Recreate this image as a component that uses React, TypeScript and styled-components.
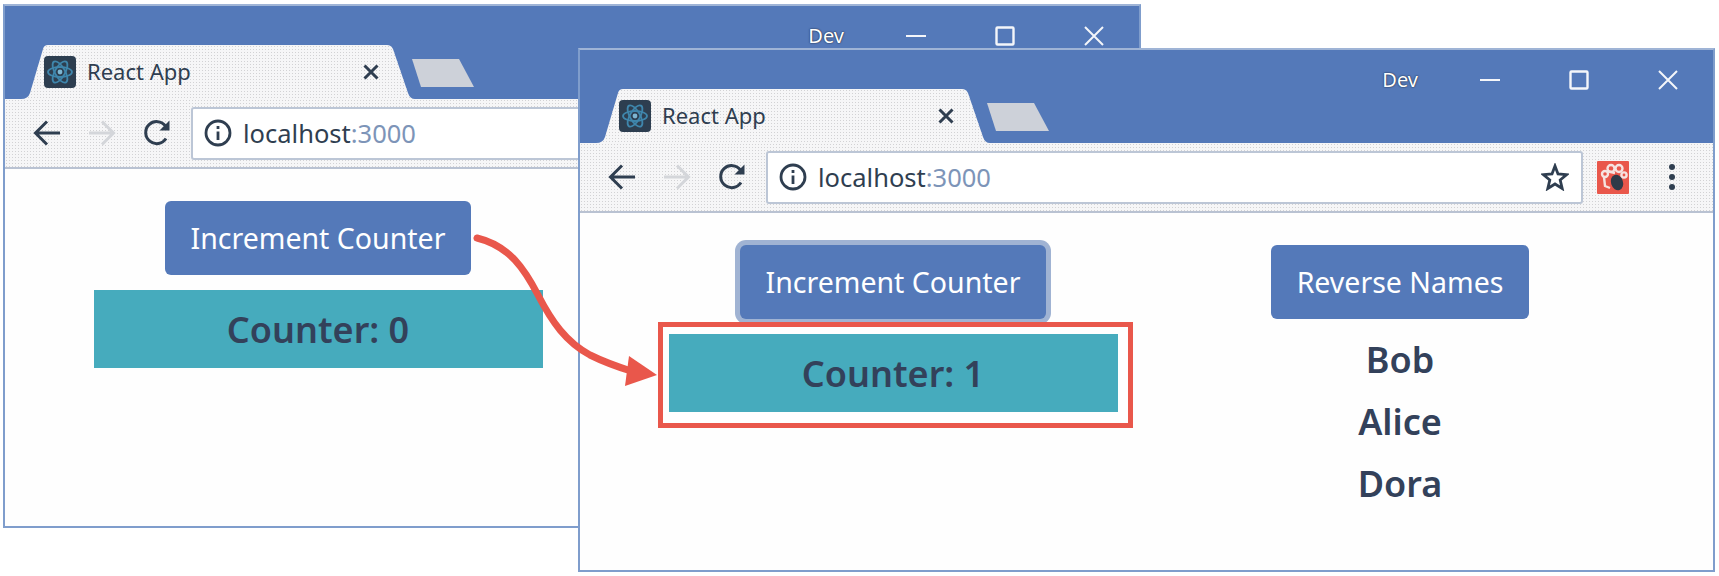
import React from "react";
import styled, { createGlobalStyle } from "styled-components";

const Global = createGlobalStyle`
  html, body { margin: 0; padding: 0; background: #fff; }
  body { font-family: "Noto Sans", "Open Sans", sans-serif; }
`;

const Desktop = styled.div`
  position: relative;
  width: 1719px;
  height: 576px;
  overflow: hidden;
  background: #fff;
`;

const Window = styled.section<{ $left: number; $top: number; $width: number }>`
  position: absolute;
  left: ${(p) => p.$left}px;
  top: ${(p) => p.$top}px;
  width: ${(p) => p.$width}px;
  height: 524px;
  box-sizing: border-box;
  display: flex;
  flex-direction: column;
  border: 2px solid #7f9dcc;
  border-top-color: #9fb4d6;
  background: #fefefe;
`;

const TitleBar = styled.header`
  height: 93px;
  flex: none;
  display: flex;
  align-items: flex-start;
  padding: 0 35px 0 16px;
  background-color: #5479b9;
  background-image: radial-gradient(#4f87b9 0.6px, transparent 0.7px);
  background-size: 4px 4px;
`;

const TabStrip = styled.div`
  display: flex;
  align-items: flex-start;
  margin-top: 39px;
`;

const Tab = styled.div`
  width: 394px;
  height: 54px;
  box-sizing: border-box;
  display: flex;
  align-items: center;
  padding: 0 36px 0 23px;
  background-color: #f6f6f7;
  background-image: radial-gradient(#d2d2d4 0.6px, transparent 0.7px);
  background-size: 3px 3px;
  clip-path: path("M0 54 Q7 54 9 48 L22 4 Q23 0 27 0 L366 0 Q370 0 372 4 L387 48 Q389 54 394 54 Z");
`;

const TabTitle = styled.span`
  flex: 1;
  margin-left: 11px;
  padding-bottom: 3px;
  font-size: 22px;
  color: #2f3e50;
`;

const NewTab = styled.div`
  width: 62px;
  height: 28px;
  margin: 14px 0 0 -3px;
  background: #cdd1d9;
  clip-path: polygon(0 0, 47px 0, 62px 28px, 9px 28px);
`;

const WindowControls = styled.div`
  margin-left: auto;
  display: flex;
  align-items: center;
  padding-top: 20px;
  color: #f4f6fa;
`;

const Channel = styled.span`
  margin-right: 62px;
  font-size: 20px;
  line-height: 20px;
  color: #fff;
  text-shadow: 0 0 2px #26344e, 0 0 1px #26344e;
`;

const ControlIcon = styled.svg`
  display: block;
  width: 20px;
  height: 20px;
  margin-left: 69px;
  &:first-of-type { margin-left: 0; }
`;

const Toolbar = styled.div`
  height: 70px;
  flex: none;
  box-sizing: border-box;
  display: flex;
  align-items: center;
  padding-left: 28px;
  border-bottom: 2px solid #b9c2d2;
  background-color: #f6f6f7;
  background-image: radial-gradient(#d2d2d4 0.6px, transparent 0.7px);
  background-size: 3px 3px;
`;

const NavIcon = styled.svg<{ $gap?: number; $muted?: boolean }>`
  display: block;
  flex: none;
  width: 28px;
  height: 28px;
  margin-left: ${(p) => p.$gap ?? 0}px;
  color: ${(p) => (p.$muted ? "#d4d6da" : "#2f3e50")};
`;

const Omnibox = styled.div`
  width: 817px;
  height: 53px;
  box-sizing: border-box;
  flex: none;
  display: flex;
  align-items: center;
  margin-left: 20px;
  padding: 0 12px 0 11px;
  background: #fff;
  border: 2px solid #bcc6d6;
  border-radius: 3px;
`;

const Address = styled.span`
  flex: 1;
  margin-left: 11px;
  font-size: 25.5px;
  color: #2f3e50;
`;

const Port = styled.span`
  color: #7d94b8;
`;

const Extension = styled.svg`
  display: block;
  flex: none;
  width: 32px;
  height: 33px;
  margin-left: 14px;
`;

const MenuDots = styled.div`
  flex: none;
  display: flex;
  flex-direction: column;
  gap: 4px;
  margin-left: 40px;
`;

const Dot = styled.span`
  display: block;
  width: 6px;
  height: 6px;
  border-radius: 50%;
  background: #2f3e50;
`;

const Content = styled.main`
  flex: 1;
  display: grid;
  grid-template-columns: 506px 508px;
  align-content: start;
  padding: 32px 0 0 60px;
`;

const Column = styled.div`
  display: flex;
  flex-direction: column;
  align-items: center;
`;

const ActionButton = styled.button<{ $focused?: boolean }>`
  height: 74px;
  padding: 0 26px;
  border: 0;
  border-radius: 6px;
  background: #5479b9;
  color: #fff;
  font-family: "Noto Sans", sans-serif;
  font-size: 28.5px;
  box-shadow: ${(p) => (p.$focused ? "0 0 0 5px #a0b3d3" : "none")};
`;

const Counter = styled.div<{ $marked?: boolean }>`
  position: relative;
  width: 449px;
  height: 78px;
  margin-top: 15px;
  padding-top: 1px;
  box-sizing: border-box;
  display: flex;
  align-items: center;
  justify-content: center;
  background: #46abbd;
  color: #33415a;
  font-size: 36px;
  font-weight: 600;
  ${(p) =>
    p.$marked
      ? `&::after {
    content: "";
    position: absolute;
    inset: -12px -15px -16px -11px;
    border: 5px solid #e9574b;
  }`
      : ""}
`;

const Name = styled.div`
  height: 62px;
  display: flex;
  align-items: center;
  font-size: 36px;
  font-weight: 600;
  color: #33415a;
`;

const NameList = styled.div`
  margin-top: 9px;
  display: flex;
  flex-direction: column;
  align-items: center;
`;

const ArrowLayer = styled.svg`
  position: absolute;
  inset: 0;
  width: 1719px;
  height: 576px;
  pointer-events: none;
`;

const ReactMark = styled.svg`
  display: block;
  flex: none;
  width: 32px;
  height: 32px;
`;

function Favicon() {
  return (
    <ReactMark viewBox="0 0 32 32">
      <rect width="32" height="32" rx="4" fill="#2d3e50" />
      <g fill="none" stroke="#3f86ac" strokeWidth="1.8">
        <ellipse cx="16" cy="16" rx="12" ry="5" />
        <ellipse cx="16" cy="16" rx="12" ry="5" transform="rotate(60 16 16)" />
        <ellipse cx="16" cy="16" rx="12" ry="5" transform="rotate(120 16 16)" />
      </g>
      <circle cx="16" cy="16" r="2.4" fill="#7db6d2" />
    </ReactMark>
  );
}

function BrowserWindow({
  left,
  top,
  width,
  children,
}: {
  left: number;
  top: number;
  width: number;
  children: React.ReactNode;
}) {
  return (
    <Window $left={left} $top={top} $width={width}>
      <TitleBar>
        <TabStrip>
          <Tab>
            <Favicon />
            <TabTitle>React App</TabTitle>
            <svg width="16" height="16" viewBox="0 0 16 16" fill="none" stroke="#2f3e50" strokeWidth="3">
              <path d="M1.5 1.5 14.5 14.5M14.5 1.5 1.5 14.5" />
            </svg>
          </Tab>
          <NewTab />
        </TabStrip>
        <WindowControls>
          <Channel>Dev</Channel>
          <ControlIcon viewBox="0 0 20 20" fill="none" stroke="currentColor" strokeWidth="2">
            <path d="M0 10H20" />
          </ControlIcon>
          <ControlIcon viewBox="0 0 20 20" fill="none" stroke="currentColor" strokeWidth="2.4">
            <rect x="1.5" y="1.5" width="17" height="17" rx="1" />
          </ControlIcon>
          <ControlIcon viewBox="0 0 20 20" fill="none" stroke="currentColor" strokeWidth="2">
            <path d="M1 1 19 19M19 1 1 19" />
          </ControlIcon>
        </WindowControls>
      </TitleBar>
      <Toolbar>
        <NavIcon viewBox="0 0 28 28" fill="none" stroke="currentColor" strokeWidth="3">
          <path d="M27 14H3M14 2.5 2.5 14 14 25.5" />
        </NavIcon>
        <NavIcon $gap={27} $muted viewBox="0 0 28 28" fill="none" stroke="currentColor" strokeWidth="3">
          <path d="M1 14H25M14 2.5 25.5 14 14 25.5" />
        </NavIcon>
        <NavIcon $gap={27} viewBox="0 0 28 28" fill="none" stroke="currentColor" strokeWidth="3">
          <path d="M23 19.5A11 11 0 1 1 22.5 7L25 10" />
          <path d="M26.5 1.5V11.5H16.5Z" fill="currentColor" stroke="none" />
        </NavIcon>
        <Omnibox>
          <NavIcon viewBox="0 0 28 28" fill="none" stroke="currentColor" strokeWidth="2.8">
            <circle cx="14" cy="14" r="12" />
            <path d="M14 12.5V21" />
            <path d="M14 7V10" />
          </NavIcon>
          <Address>
            localhost<Port>:3000</Port>
          </Address>
          <NavIcon viewBox="0 0 28 28" fill="none" stroke="currentColor" strokeWidth="2.8" strokeLinejoin="miter">
            <path d="M14 3 17 11 25.5 11.7 19.2 17 21.2 25.5 14 21 6.8 25.5 8.8 17 2.5 11.7 11 11Z" />
          </NavIcon>
        </Omnibox>
        <Extension viewBox="0 0 32 33">
          <rect width="32" height="33" rx="1" fill="#e9574b" />
          <g fill="none" stroke="#f6e3e0" strokeWidth="2.4">
            <circle cx="14" cy="7.5" r="3.5" />
            <circle cx="22" cy="7.5" r="3.5" />
            <circle cx="8" cy="13" r="3" />
            <circle cx="27" cy="14" r="2.6" />
            <path d="M7 16 8 25 13 27M10 10 18 12" />
          </g>
          <ellipse cx="20" cy="21.5" rx="6" ry="8" fill="#2f3a48" transform="rotate(-18 20 21.5)" />
        </Extension>
        <MenuDots>
          <Dot />
          <Dot />
          <Dot />
        </MenuDots>
      </Toolbar>
      <Content>{children}</Content>
    </Window>
  );
}

export default function App() {
  return (
    <Desktop>
      <Global />
      <BrowserWindow left={3} top={4} width={1138}>
        <Column>
          <ActionButton>Increment Counter</ActionButton>
          <Counter>Counter: 0</Counter>
        </Column>
      </BrowserWindow>
      <BrowserWindow left={578} top={48} width={1137}>
        <Column>
          <ActionButton $focused>Increment Counter</ActionButton>
          <Counter $marked>Counter: 1</Counter>
        </Column>
        <Column>
          <ActionButton>Reverse Names</ActionButton>
          <NameList>
            <Name>Bob</Name>
            <Name>Alice</Name>
            <Name>Dora</Name>
          </NameList>
        </Column>
      </BrowserWindow>
      <ArrowLayer viewBox="0 0 1719 576">
        <path
          d="M477 238C510 246 525 270 538 295C552 322 566 342 590 355C604 362 618 367 634 372"
          fill="none"
          stroke="#e9574b"
          strokeWidth="7"
          strokeLinecap="round"
        />
        <path d="M629 356 657 375 625 386Z" fill="#e9574b" />
      </ArrowLayer>
    </Desktop>
  );
}
